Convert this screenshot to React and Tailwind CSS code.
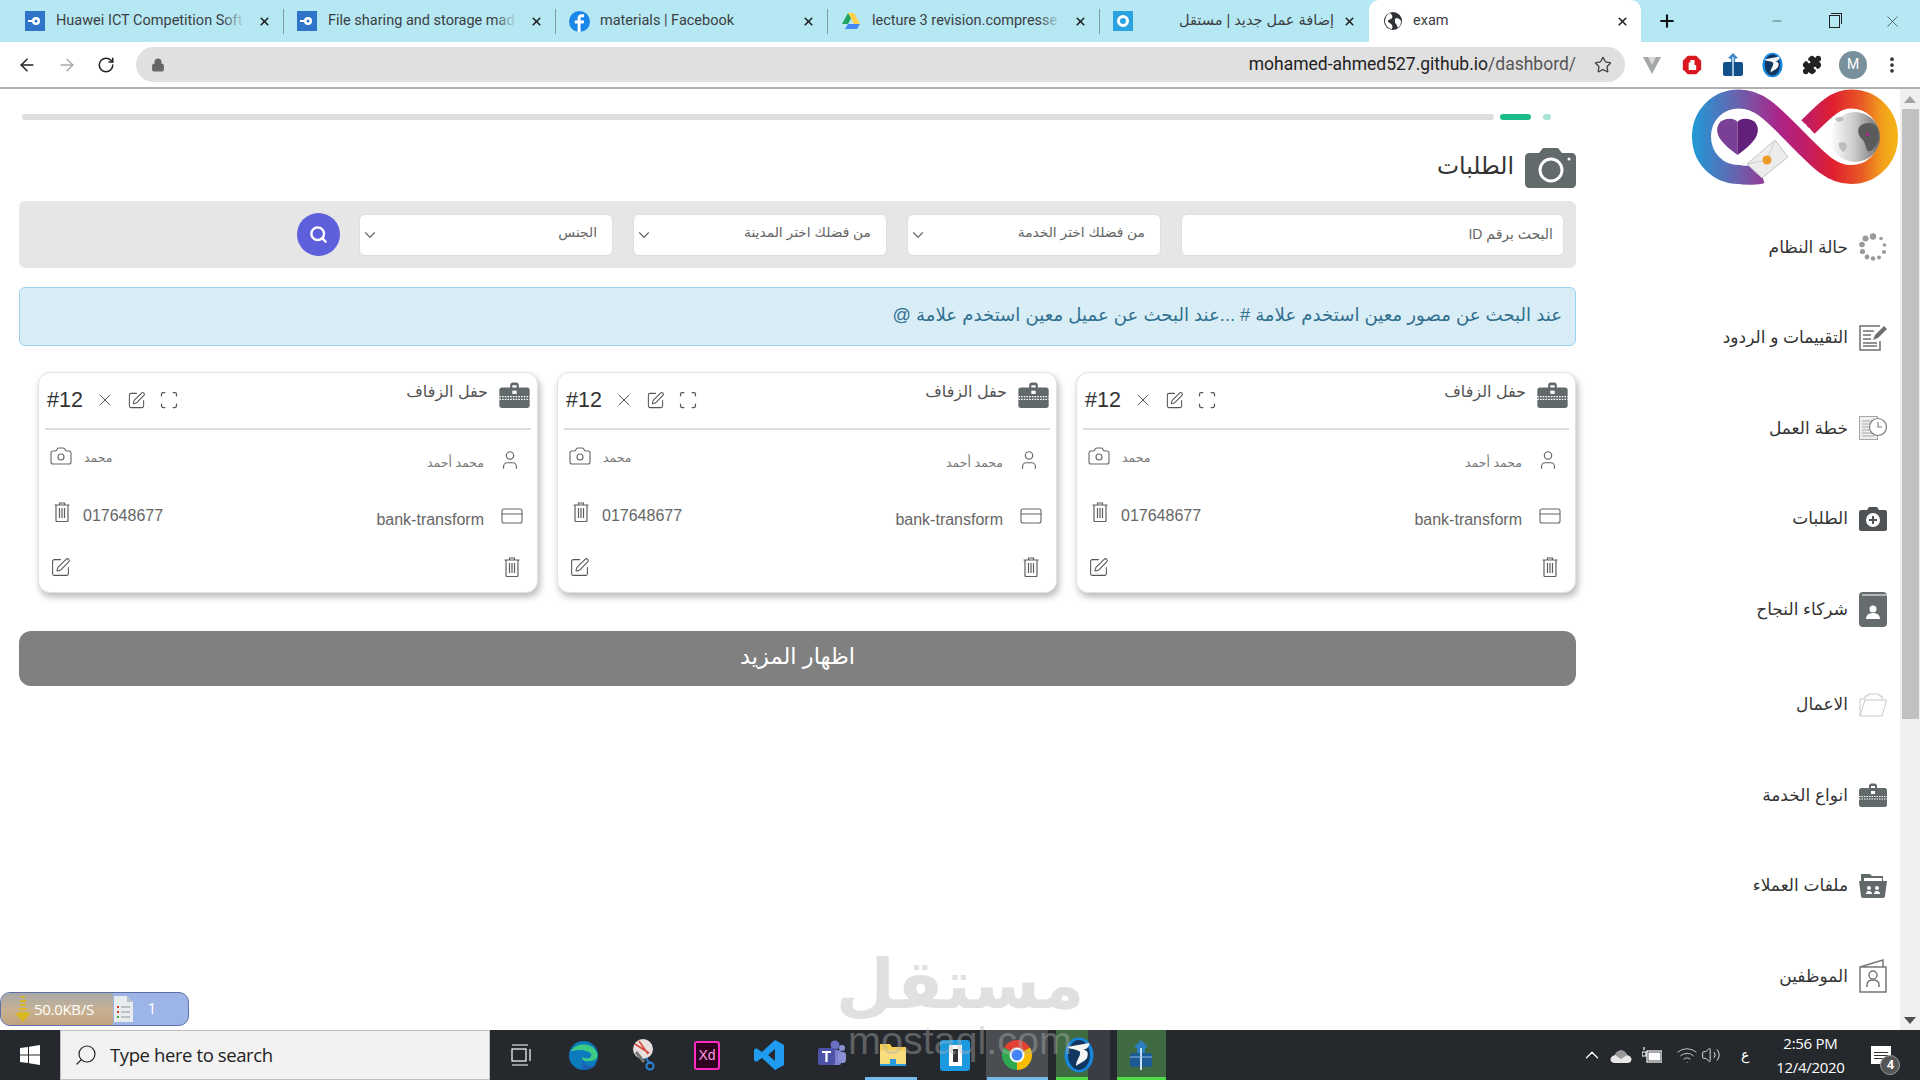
import React from "react";
import { ArrowLeft, ArrowRight, RotateCw, Lock, Star, X, Plus, Minus, Search, ChevronDown, EllipsisVertical, Puzzle, SquarePen, Scan, User, CreditCard, Camera, ChevronUp, Volume2, Wifi } from "lucide-react";

const ar = "font-['Liberation_Sans','DejaVu_Sans',sans-serif]";

const TabIconBird = () => (
  <svg width="20" height="20" viewBox="0 0 20 20"><rect width="20" height="20" fill="#2f74c9" /><circle cx="11" cy="10" r="4" fill="#fff" /><path d="M3 9h6v2H3z" fill="#fff" /><circle cx="11" cy="10" r="1.5" fill="#2f74c9" /></svg>
);
const TabIconFb = () => (
  <svg width="21" height="21" viewBox="0 0 20 20"><circle cx="10" cy="10" r="10" fill="#1a86e8" /><path d="M11 20v-8h3l.4-3H11V7.4c0-1 .4-1.5 1.6-1.5h1.8V3.2C14 3.100 13 3 12 3 9.700 3 8.200 4.400 8.200 7v2H5.500v3h2.700v8z" fill="#fff" /></svg>
);
const TabIconDrive = () => (
  <svg width="20" height="20" viewBox="0 0 20 20"><path d="M7 2h6l-6 11H1z" fill="#1fa463" /><path d="M7 2h6l6 11h-6z" fill="#ffd04b" /><path d="M4 18l3-5h12l-3 5z" fill="#4688f4" /></svg>
);
const TabIconRing = () => (
  <svg width="20" height="20" viewBox="0 0 20 20"><rect width="20" height="20" fill="#2ba3e3" /><circle cx="10" cy="10" r="4.500" fill="none" stroke="#fff" strokeWidth="3" /></svg>
);
const TabIconGlobe = () => (
  <svg width="18" height="18" viewBox="0 0 18 18"><circle cx="9" cy="9" r="9" fill="#2f3337" /><path d="M6 1c2 2 3 3 2 5S4 7 4 9s3 2 4 4 0 3 0 4c-3 0-6-3-7-7 0-4 2-8 5-9zM12 6c2 0 4 1 5 3 0 3-1 5-3 7-1-2-1-3-2-4s-2-4 0-6z" fill="#fff" /></svg>
);

const tabs = [
  { title: "Huawei ICT Competition Soft", icon: <TabIconBird />, width: "w-[272px]", fade: true },
  { title: "File sharing and storage mad", icon: <TabIconBird />, width: "w-[272px]", fade: true },
  { title: "materials | Facebook", icon: <TabIconFb />, width: "w-[272px]" },
  { title: "lecture 3 revision.compresse", icon: <TabIconDrive />, width: "w-[272px]", fade: true },
  { title: "إضافة عمل جديد | مستقل", icon: <TabIconRing />, width: "w-[269px]", rtl: true },
];

const Dots = () => (
  <svg width="28" height="28" viewBox="0 0 28 28" fill="#9a9a9a">
    <circle cx="14" cy="3.500" r="3.200" /><circle cx="22" cy="5.500" r="1.800" /><circle cx="25.500" cy="12" r="1.800" /><circle cx="25" cy="19" r="2" /><circle cx="20" cy="24.500" r="2" /><circle cx="14" cy="25.500" r="2.200" /><circle cx="8" cy="24" r="2.400" /><circle cx="3.500" cy="18.500" r="2.600" /><circle cx="3" cy="11.500" r="2.800" /><circle cx="6.500" cy="5.500" r="3" />
  </svg>
);
const ReviewIcon = () => (
  <svg width="28" height="26" viewBox="0 0 28 26" fill="none" stroke="#6c7070" strokeWidth="1.500">
    <path d="M21 1H1v24h20v-9" /><path d="M4 6h11M4 10h8M4 14h8M4 18h14M4 21h14" />
    <path d="M14 15l2-5L25 1l3 3-9 9z" fill="#6c7070" stroke="none" />
  </svg>
);
const PlanIcon = () => (
  <svg width="28" height="24" viewBox="0 0 28 24" fill="none" stroke="#a8a8a8" strokeWidth="1">
    <rect x="0.500" y="0.500" width="18" height="23" fill="#eee" /><path d="M3 5h12M3 8h8M3 11h8M3 14h8M3 17h12M3 20h12" />
    <circle cx="19" cy="11" r="8.500" fill="#fff" stroke="#808080" strokeWidth="1.200" /><path d="M19 6v5h4" stroke="#808080" strokeWidth="1.200" />
  </svg>
);
const CameraPlusIcon = () => (
  <svg width="28" height="24" viewBox="0 0 28 24">
    <path d="M2 3h6l2-3h8l2 3h6c1 0 2 1 2 2v17c0 1-1 2-2 2H2c-1 0-2-1-2-2V5c0-1 1-2 2-2z" fill="#4f5356" />
    <circle cx="14" cy="13" r="7" fill="#fff" /><path d="M10 13h8M14 9v8" stroke="#4f5356" strokeWidth="2" />
  </svg>
);
const PartnerIcon = () => (
  <svg width="28" height="35" viewBox="0 0 28 35">
    <rect width="28" height="35" rx="4" fill="#666c6d" /><path d="M3 3h25" stroke="#fff" strokeWidth="1" />
    <circle cx="14" cy="17" r="3.500" fill="#fff" /><path d="M7 27c0-4 3-6 7-6s7 2 7 6z" fill="#fff" />
  </svg>
);
const FolderOpenIcon = () => (
  <svg width="28" height="24" viewBox="0 0 28 24" fill="none" stroke="#c8c8c8" strokeWidth="1">
    <path d="M1 23V6h5V3h3V1h11v2h3v4" /><path d="M1 23h22l4.500-16H6z" />
  </svg>
);
const BriefcaseIcon = ({ w = 28, h = 24 }) => (
  <svg width={w} height={h} viewBox="0 0 28 24">
    <path d="M10 6V3c0-1.500 1-2.500 2.500-2.500h3C17 .5 18 1.500 18 3v3h-2V3h-4v3z" fill="#62696a" />
    <rect y="5" width="28" height="19" rx="2.500" fill="#62696a" />
    <path d="M0 13.500h28M0 16h28" stroke="#fff" strokeWidth="1" strokeDasharray="1.500 1" />
    <rect x="12" y="8" width="4" height="3" fill="#fff" />
  </svg>
);
const FilesIcon = () => (
  <svg width="28" height="24" viewBox="0 0 28 24">
    <path d="M2 0h9l2 2h11v5H2z" fill="#62696a" /><path d="M5 4h18v3H5z" fill="#fff" />
    <path d="M0 7h28l-2 15c0 1-1 2-2 2H4c-1 0-2-1-2-2z" fill="#62696a" />
    <circle cx="10" cy="14" r="2" fill="#fff" /><circle cx="18" cy="14" r="2" fill="#fff" /><path d="M7 20c0-2 1-3 3-3s3 1 3 3zM15 20c0-2 1-3 3-3s3 1 3 3z" fill="#fff" />
  </svg>
);
const EmployeeIcon = () => (
  <svg width="28" height="34" viewBox="0 0 28 34" fill="none" stroke="#777" strokeWidth="1.500">
    <path d="M1 8h26v25H1zM1 8l23-7v7" />
    <circle cx="14" cy="16" r="4" /><path d="M8 28v-2c0-3 2-5 6-5s6 2 6 5v2" />
  </svg>
);

const navItems = [
  { label: "حالة النظام", icon: <Dots /> },
  { label: "التقييمات و الردود", icon: <ReviewIcon /> },
  { label: "خطة العمل", icon: <PlanIcon /> },
  { label: "الطلبات", icon: <CameraPlusIcon /> },
  { label: "شركاء النجاح", icon: <PartnerIcon /> },
  { label: "الاعمال", icon: <FolderOpenIcon />, extra: "mt-[5px]" },
  { label: "انواع الخدمة", icon: <BriefcaseIcon /> },
  { label: "ملفات العملاء", icon: <FilesIcon /> },
  { label: "الموظفين", icon: <EmployeeIcon /> },
];

const TrashIcon = ({ w = 16, h = 20 }) => (
  <svg width={w} height={h} viewBox="0 0 16 20" fill="none" stroke="#5f5f5f" strokeWidth="1.200">
    <path d="M0.500 3h15M5.500 3V1h5v2M2 3v15.500c0 .5.500 1 1 1h10c.5 0 1-.5 1-1V3" />
    <path d="M5.500 6v10M8 6v10M10.500 6v10" />
  </svg>
);

const SearchField = ({ label }) => (
  <div className="w-[254px] h-[42px] bg-white rounded-md border border-[#dedede] flex items-center justify-between pl-[1px] pr-[15px]">
    <ChevronDown size={18} color="#666" strokeWidth={1.500} />
    <span className={`${ar} text-[13.800px] text-[#666] -mt-[2px]`}>{label}</span>
  </div>
);

const OrderCard = () => (
  <div className="w-[500px] h-[221px] bg-white rounded-xl border border-[#e2e2e2] shadow-[2px_4px_7px_rgba(0,0,0,0.28)] px-[6px]">
    <div className="h-[57px] border-b-2 border-[#dddddd] flex justify-between">
      <div className="flex items-center pl-[2px] pb-[1px]">
        <span className="font-['Liberation_Sans',sans-serif] text-[21.500px] text-[#333] w-[48px]">#12</span>
        <X size={20} strokeWidth={1.100} color="#444" />
        <span className="ml-[12px]"><SquarePen size={19} strokeWidth={1.300} color="#555" /></span>
        <span className="ml-[13px]"><Scan size={20} strokeWidth={1.500} color="#555" /></span>
      </div>
      <div className="flex items-start pt-[9px]">
        <span className={`${ar} text-[16px] text-[#555] leading-[20px] mr-[10px]`}>حفل الزفاف</span>
        <BriefcaseIcon w={33} h={26} />
      </div>
    </div>
    <div className="flex justify-between h-[46px] pl-[4px] pr-[10px]">
      <div className="flex pt-[15px]">
        <Camera size={24} strokeWidth={1.100} color="#666" className="-mt-[1px]" />
        <span className={`${ar} text-[12.500px] text-[#777] ml-[11px] mt-[4px]`}>محمد</span>
      </div>
      <div className="flex pt-[20px]">
        <span className={`${ar} text-[12.500px] text-[#777] mr-[15px] mt-[4px]`}>محمد أحمد</span>
        <User size={22} strokeWidth={1.300} color="#666" className="-mt-[1px]" />
      </div>
    </div>
    <div className="flex justify-between h-[44px] pl-[9px] pr-[7px]">
      <div className="flex pt-[26px]">
        <TrashIcon />
        <span className="font-['Liberation_Sans',sans-serif] text-[16px] text-[#666] ml-[13px] leading-[22px] mt-[3px]">017648677</span>
      </div>
      <div className="flex pt-[29px]">
        <span className="font-['Liberation_Sans',sans-serif] text-[16px] text-[#666] mr-[16px] leading-[22px] mt-[4px]">bank-transform</span>
        <CreditCard size={24} strokeWidth={1.100} color="#666" className="-mt-[1px]" />
      </div>
    </div>
    <div className="flex justify-between pl-[5px] pr-[11px] pt-[37px]">
      <SquarePen size={21} strokeWidth={1.200} color="#555" />
      <TrashIcon />
    </div>
  </div>
);

const taskIcons = [
  <svg width="22" height="22" viewBox="0 0 22 22" fill="none" stroke="#fff" strokeWidth="1.200"><path d="M2 1h16M2 21h16" /><rect x="2" y="5" width="14" height="12" /><path d="M20 5v12" /></svg>,
  <svg width="31" height="31" viewBox="0 0 32 32"><circle cx="16" cy="16" r="15" fill="#0c7bbd" /><path d="M3 12C6 3 25 1 30 13c2 7-3 9-10 9-5 0-6-3-5-5 1 3 10 3 9-2-2-5-15-6-21-3z" fill="#3ecb83" /><path d="M15 17c0 8 6 14 15 7-3 5-10 8-15 6z" fill="#1a5fb4" /></svg>,
  <svg width="32" height="34" viewBox="0 0 32 34"><circle cx="14" cy="11" r="10" fill="#e8e0de" /><path d="M6 6l14 9M10 3l9 13" stroke="#d8433a" strokeWidth="1.500" /><path d="M7 14l8 10" stroke="#777" strokeWidth="3" /><circle cx="21" cy="28" r="3.500" fill="none" stroke="#2a84d8" strokeWidth="2" /><path d="M17 20l4 6" stroke="#2a84d8" strokeWidth="2" /></svg>,
  <div className="w-[26px] h-[29px] border-2 border-[#ff2bc2] rounded-[3px] bg-[#2e001f] flex items-center justify-center text-[#ff9ae0] text-[14px] font-['Liberation_Sans',sans-serif]">Xd</div>,
  <svg width="32" height="32" viewBox="0 0 32 32"><path d="M22 1l9 5v20l-9 5-13-12-6 4-2-2V11l2-2 6 4zM22 10l-7 6 7 6z" fill="#1f9cf0" fillRule="evenodd" /></svg>,
  <svg width="32" height="32" viewBox="0 0 32 32"><circle cx="20" cy="6" r="4.500" fill="#6b70c4" /><circle cx="27" cy="9" r="3" fill="#8b8fd6" /><rect x="14" y="11" width="12" height="15" rx="2" fill="#7b80d0" /><rect x="23" y="13" width="8" height="11" rx="3" fill="#8b8fd6" /><rect x="3" y="9" width="17" height="17" rx="2" fill="#4b52a8" /><path d="M7 13h9M11.500 13v10" stroke="#fff" strokeWidth="2.200" /></svg>,
  <svg width="30" height="30" viewBox="0 0 30 30"><path d="M2 4h10l2 3h14v19H2z" fill="#f6cf52" /><path d="M2 10h26v16H2z" fill="#f9dd7b" /><rect x="12" y="19" width="6" height="7" fill="#2a9be0" /><rect x="2" y="24" width="26" height="2" fill="#2a9be0" /></svg>,
  <div className="w-[30px] h-[31px] bg-[#1b9ae0] rounded-[3px] flex items-center justify-center"><div className="w-[13px] h-[21px] bg-white flex items-center justify-center"><div className="w-[5px] h-[13px] bg-[#33373b]" /></div></div>,
  <svg width="32" height="32" viewBox="0 0 32 32"><path d="M16 16L3 8.500A15 15 0 0 1 29 8.500z" fill="#e34133" /><path d="M16 16L3 8.500A15 15 0 0 0 16 31z" fill="#2fa84f" /><path d="M16 16l13-7.500A15 15 0 0 1 16 31z" fill="#fbbc05" /><circle cx="16" cy="16" r="7.500" fill="#fff" /><circle cx="16" cy="16" r="5.500" fill="#4285f4" /></svg>,
  <svg width="30" height="36" viewBox="0 0 30 36"><ellipse cx="15" cy="18" rx="14.500" ry="17.500" fill="#1787dc" /><ellipse cx="15" cy="18" rx="11" ry="15" fill="#11365f" /><path d="M3 10l22-4c1 3-2 6-6 7 4 0 6 2 4 8-3 4-9 6-11 8 0-6 5-10 4-14C14 12 8 13 3 10z" fill="#f5f5f5" /></svg>,
  <svg width="24" height="30" viewBox="0 0 24 30"><path d="M12 0l7 7-3 1v5H8V8L5 7z" fill="#2b7fc0" /><rect x="1" y="13" width="22" height="14" rx="2" fill="#1c5b94" /><path d="M12 8v22" stroke="#c8dff3" strokeWidth="2" /><path d="M1 17h22" stroke="#8dbbe0" strokeWidth="1" /></svg>,
];

const taskBgs = {
  8: "bg-[#4a4e52]",
  9: "bg-[linear-gradient(90deg,#25292d_0,#25292d_8px,#3f6a42_8px,#3f6a42_40px,#3a3e44_40px)]",
  10: "bg-[linear-gradient(90deg,#25292d_0,#25292d_7px,#3f6a42_7px,#3f6a42_56px,#25292d_56px)]",
};
const taskLines = {
  6: "left-[3px] w-[52px] bg-[#76b9ed]",
  8: "left-[1px] w-[61px] bg-[#76b9ed]",
  9: "left-[8px] w-[32px] bg-[#4fdc45]",
  10: "left-[7px] w-[49px] bg-[#4fdc45]",
};

const Logo = () => (
  <svg width="207" height="96" viewBox="0 0 207 96">
    <defs>
      <linearGradient id="inf" gradientUnits="userSpaceOnUse" x1="0" y1="0" x2="207" y2="0">
        <stop offset="0" stopColor="#1f9ad6" />
        <stop offset="0.22" stopColor="#6a62ae" />
        <stop offset="0.42" stopColor="#ab2488" />
        <stop offset="0.55" stopColor="#c01d66" />
        <stop offset="0.68" stopColor="#e01f30" />
        <stop offset="0.82" stopColor="#e85a25" />
        <stop offset="0.92" stopColor="#f3a01b" />
        <stop offset="1" stopColor="#f5b716" />
      </linearGradient>
      <linearGradient id="glb" x1="0" y1="0" x2="1" y2="0">
        <stop offset="0" stopColor="#ffffff" />
        <stop offset="0.5" stopColor="#c9c9c9" />
        <stop offset="1" stopColor="#6b6b6b" />
      </linearGradient>
    </defs>
    <path d="M70 85 C66 86 55 87 47 85.500 C26 85.500 9.500 69 9.500 47.500 C9.500 26 26 10 47 10 C66 10 78 22 103 47.500 C128 73 140 85.500 159 85.500 C180 85.500 196.500 69 196.500 47.500 C196.500 26 180 10 159 10 C143 10 132 22 116 38" fill="none" stroke="url(#inf)" strokeWidth="19" />
    <path d="M109 31l2 5 3-1 1 5 3-1 1 5 4 1-3 4-15-14z" fill="#fff" />
    <circle cx="163" cy="48" r="25" fill="url(#glb)" />
    <path d="M168 37c5-4 13-4 17 1 3 6 2 14-2 20-3 3-6 6-8 3-2-5-2-9-6-12-3-4-4-8-1-12z" fill="#5b5b5b" />
    <path d="M143 30c4-3 8-2 9 0-2 3-7 4-9 0zM147 54c4-2 8 0 8 3-1 4-3 7-5 5-2-2-4-6-3-8z" fill="#bdbdbd" />
    <rect x="174" y="44" width="3" height="3" fill="#a3298f" />
    <path d="M45.500 33c-3-4-9-4-14-2-7 3-8 11-4 18 4 6 11 12 18 17z" fill="#7a4096" />
    <path d="M45.500 33c3-4 9-4 14-2 7 3 8 11 4 18-4 6-11 12-18 17z" fill="#63207a" />
    <path d="M55 75L83 51 96 68 70 89z" fill="#ececea" stroke="#c4c4c4" strokeWidth="1" />
    <path d="M55 75L75 71 83 51" fill="none" stroke="#cfcfcf" strokeWidth="1" />
    <circle cx="75" cy="71" r="4.500" fill="#ee9a2a" />
  </svg>
);

export default function App() {
  return (
    <div className="w-[1920px] h-[1080px] overflow-hidden relative bg-white flex flex-col font-['Roboto',sans-serif]">
      {/* tab strip */}
      <div className="h-[42px] bg-[#b6e8f3] flex items-end pl-[12px] shrink-0">
        {tabs.map((t, i) => (
          <div key={i} className={`${t.width} h-[42px] flex items-center pl-[13px] pr-[13px] relative`}>
            <div className="w-[20px] shrink-0">{t.icon}</div>
            <div className={`flex-1 relative overflow-hidden whitespace-nowrap text-[14.500px] text-[#3c4043] ml-[11px] ${t.rtl ? `text-right ${ar}` : ""}`} dir={t.rtl ? "rtl" : "ltr"}>
              {t.title}
              {t.fade && <div className="absolute right-0 top-0 h-full w-[22px] bg-gradient-to-r from-transparent to-[#b6e8f3]" />}
            </div>
            <X size={13} strokeWidth={3} color="#222" className={`shrink-0 ${t.rtl ? "ml-[9px]" : "ml-[13px]"}`} />
            {i < 4 && <div className="absolute right-0 top-[9px] w-px h-[25px] bg-[#7f9aa3]" />}
          </div>
        ))}
        <div className="w-[272px] h-[42px] bg-white rounded-t-[10px] flex items-center pl-[15px] pr-[12px]">
          <TabIconGlobe />
          <div className="flex-1 text-[14.500px] text-[#3c4043] ml-[11px]">exam</div>
          <X size={13} strokeWidth={3} color="#222" />
        </div>
        <div className="w-[52px] h-[42px] flex items-center justify-center"><Plus size={20} strokeWidth={2.500} color="#111" /></div>
        <div className="ml-auto flex h-[42px]">
          <div className="w-[57px] flex items-center justify-center"><Minus size={14} strokeWidth={1} color="#222" /></div>
          <div className="w-[59px] flex items-center justify-center">
            <div className="w-[11px] h-[13px] border border-[#222] relative"><div className="absolute -top-[3px] left-[1px] w-[11px] h-[11px] border-t border-r border-[#222]" /></div>
          </div>
          <div className="w-[56px] flex items-center justify-center"><X size={19} strokeWidth={0.800} color="#222" /></div>
        </div>
      </div>
      {/* toolbar */}
      <div className="h-[47px] bg-white border-b-2 border-[#b0b0b0] flex items-center shrink-0">
        <div className="w-[136px] flex items-center pl-[17px] gap-[20px]">
          <ArrowLeft size={20} strokeWidth={1.800} color="#222" />
          <ArrowRight size={20} strokeWidth={1.800} color="#aaa" />
          <RotateCw size={18} strokeWidth={2} color="#222" />
        </div>
        <div className="w-[1489px] h-[35px] bg-[#e0e0e0] rounded-full flex items-center justify-between pl-[15px] pr-[13px]">
          <Lock size={14} fill="#666" color="#666" />
          <div className="flex items-center">
            <span className="text-[17.500px] text-[#222]">mohamed-ahmed527.github.io<span className="text-[#555]">/dashbord/</span></span>
            <Star size={18} strokeWidth={1.800} color="#444" className="ml-[18px]" />
          </div>
        </div>
        <div className="flex-1 flex items-center pl-[17px]">
          <svg width="20" height="20" viewBox="0 0 20 20"><path d="M1 2h18l-9 17z" fill="#a5a8a8" /><path d="M6 2h8l-4 8z" fill="#d8d8d8" /></svg>
          <svg width="20" height="24" viewBox="0 0 24 24" className="ml-[20px]"><path d="M7 1h10l6 6v10l-6 6H7l-6-6V7z" fill="#d8171e" /><path d="M8 18V9h2V6h5v6h2v6z" fill="#fff" /></svg>
          <svg width="20" height="24" viewBox="0 0 20 24" className="ml-[21px]"><path d="M10 0l5 5-3 1v3H8V6L5 5z" fill="#3f86c4" /><rect x="0" y="9" width="20" height="14" rx="2" fill="#12508c" /><path d="M10 4v20" stroke="#cfe4f5" strokeWidth="1.500" /></svg>
          <svg width="21" height="26" viewBox="0 0 30 36" className="ml-[19px]"><ellipse cx="15" cy="18" rx="14.500" ry="17.500" fill="#1787dc" /><ellipse cx="15" cy="18" rx="11" ry="15" fill="#11365f" /><path d="M3 10l22-4c1 3-2 6-6 7 4 0 6 2 4 8-3 4-9 6-11 8 0-6 5-10 4-14C14 12 8 13 3 10z" fill="#f5f5f5" /></svg>
          <Puzzle size={20} fill="#222" color="#222" className="ml-[19px]" />
          <div className="ml-[17px] w-[28px] h-[28px] rounded-full bg-[#78909c] text-white text-[14px] flex items-center justify-center">M</div>
          <EllipsisVertical size={20} strokeWidth={2.500} color="#333" className="ml-[15px]" />
        </div>
      </div>
      {/* page */}
      <div className="flex-1 flex min-h-0">
        <main className="w-[1595px] pl-[19px] shrink-0">
          <div className="flex items-center w-[1532px] ml-[3px] h-[6px] mt-[25px]">
            <div className="w-[1472px] h-[6px] rounded-full bg-[#dedede]" />
            <div className="w-[31px] h-[6px] ml-[6px] rounded-full bg-[#1abc8c]" />
            <div className="w-[8px] h-[6px] ml-[12px] rounded-full bg-[#a6e4d6]" />
          </div>
          <div className="w-[1557px] flex justify-end items-center h-[40px] mt-[28px]">
            <span className={`${ar} text-[23.500px] text-[#333] mr-[11px] -mt-[2px]`}>الطلبات</span>
            <svg width="51" height="40" viewBox="0 0 51 40">
              <path d="M4 5h10l4-5h15l4 5h10c2 0 4 2 4 4v27c0 2-2 4-4 4H4c-2 0-4-2-4-4V9c0-2 2-4 4-4z" fill="#636a6b" />
              <circle cx="26" cy="22" r="11" fill="none" stroke="#fff" strokeWidth="3" /><circle cx="44" cy="11" r="1.500" fill="#fff" />
            </svg>
          </div>
          <div className="w-[1557px] h-[67px] mt-[13px] bg-[#e6e6e6] rounded-md flex items-center pl-[278px] gap-[19px]">
            <div className="w-[43px] h-[43px] rounded-full bg-[#5d5fdb] flex items-center justify-center">
              <Search size={19} strokeWidth={3} color="#fff" />
            </div>
            <div className="flex gap-[20px]">
              <SearchField label="الجنس" />
              <SearchField label="من فضلك اختر المدينة" />
              <SearchField label="من فضلك اختر الخدمة" />
              <div className="w-[383px] h-[42px] bg-white rounded-md border border-[#dedede] flex items-center justify-end pr-[10px]">
                <span className={`${ar} text-[14px] text-[#666]`} dir="rtl">البحث برقم ID</span>
              </div>
            </div>
          </div>
          <div className="w-[1557px] h-[59px] mt-[19px] bg-[#d9edf7] border border-[#9ad3ee] rounded-md flex items-center justify-end pr-[13px]">
            <span className={`${ar} text-[18.150px] text-[#31708f] -mt-[2px]`} dir="rtl">عند البحث عن مصور معين استخدم علامة # ...عند البحث عن عميل معين استخدم علامة @</span>
          </div>
          <div className="w-[1557px] flex justify-end gap-[19px] mt-[26px]">
            <OrderCard />
            <OrderCard />
            <OrderCard />
          </div>
          <button className={`w-[1557px] h-[55px] mt-[38px] pb-[3px] bg-[#808080] rounded-xl text-white text-[22.500px] ${ar}`}>اظهار المزيد</button>
        </main>
        <aside className="flex-1 relative">
          <div className="absolute left-[97px] top-0 overflow-hidden h-[96px]"><Logo /></div>
          <div className="pt-[113px] flex flex-col">
            {navItems.map((n, i) => (
              <div key={i} className={`h-[90.500px] flex items-center justify-end pr-[13px] ${n.extra || ""}`}>
                <span className={`${ar} text-[17px] text-[#333] mr-[11px]`}>{n.label}</span>
                <div className="w-[28px] flex justify-center">{n.icon}</div>
              </div>
            ))}
          </div>
        </aside>
        <div className="w-[20px] bg-[#f0f0f0] flex flex-col items-center shrink-0 relative">
          <div className="h-[20px] flex items-center"><div className="w-0 h-0 border-x-[6px] border-x-transparent border-b-[7px] border-b-[#a3a3a3]" /></div>
          <div className="w-[17px] h-[610px] bg-[#c1c1c1]" />
          <div className="mt-auto h-[20px] flex items-center"><div className="w-0 h-0 border-x-[6px] border-x-transparent border-t-[7px] border-t-[#505050]" /></div>
        </div>
      </div>
      {/* taskbar */}
      <div className="h-[50px] bg-[#25292d] flex items-stretch shrink-0">
        <div className="w-[60px] flex items-center justify-center">
          <svg width="20" height="20" viewBox="0 0 20 20" fill="#fff"><path d="M0 3l8-1v7.500H0zM9 1.800L20 0v9.500H9zM0 10.500h8V18l-8-1zM9 10.500h11V20L9 18.200z" /></svg>
        </div>
        <div className="w-[430px] bg-[#f2f2f2] border border-[#bfbfbf] flex items-center pl-[13px]">
          <Search size={24} strokeWidth={1.200} color="#222" className="-scale-x-100" />
          <span className="ml-[12px] text-[18.500px] text-[#222] font-['Open_Sans',sans-serif] tracking-[-0.4px]">Type here to search</span>
        </div>
        {taskIcons.map((icon, i) => (
          <div key={i} className={`w-[62px] relative flex items-center justify-center ${taskBgs[i] || ""}`}>
            {icon}
            {taskLines[i] && <div className={`absolute bottom-0 h-[3px] ${taskLines[i]}`} />}
          </div>
        ))}
        <div className="flex-1 flex items-center pl-[409px]">
          <ChevronUp size={22} strokeWidth={1.300} color="#fff" />
          <svg width="22" height="16" viewBox="0 0 22 16" className="ml-[7px]"><path d="M5 16c-6 0-6-7 0-8 2-6 10-6 12 0 6 1 6 8 0 8z" fill="#e8e8e8" /><path d="M5 8c2-6 10-6 12 0l-6 4z" fill="#9a9a9a" /></svg>
          <svg width="20" height="18" viewBox="0 0 20 18" className="ml-[10px]" fill="none" stroke="#fff" strokeWidth="1.200"><rect x="5" y="5" width="15" height="11" /><rect x="7" y="7" width="11" height="7" fill="#fff" /><path d="M2 1v3M0 6h4v4H0z" /></svg>
          <Wifi size={22} strokeWidth={1} color="#ccc" className="ml-[14px]" />
          <Volume2 size={20} strokeWidth={1.200} color="#ddd" className="ml-[3px]" />
          <span className={`${ar} text-white text-[14px] ml-[20px]`}>ع</span>
          <div className="ml-[21px] w-[80px] flex flex-col items-center text-white text-[15px] leading-[24px] font-['Open_Sans',sans-serif] tracking-[-0.3px]">
            <span>2:56 PM</span>
            <span>12/4/2020</span>
          </div>
          <div className="relative ml-[21px]">
            <div className="w-[20px] h-[18px] bg-white flex flex-col gap-[2px] justify-center px-[3px]"><div className="h-px bg-[#333]" /><div className="h-px bg-[#333]" /><div className="h-px bg-[#333]" /></div>
            <div className="absolute -right-[9px] top-[9px] w-[20px] h-[20px] rounded-full bg-[#555] border border-[#999] text-white text-[13px] font-bold flex items-center justify-center">4</div>
          </div>
        </div>
      </div>
      {/* network speed widget */}
      <div className="absolute left-0 top-[992px] w-[189px] h-[34px] rounded-[10px] border border-[#5f6fa8] bg-[#9db5e6] overflow-hidden flex items-center">
        <div className="w-[112px] h-full bg-[linear-gradient(180deg,#a8a8a8,#c8b292_55%,#c0a27e)] flex items-center pl-[14px] text-white text-[15px]">
          <svg width="16" height="28" viewBox="0 0 16 28"><path d="M6 1h4v2H6zM5 5h6v2H5zM5 9h6v2H5zM4 13h8v2H4zM4 17h8v1h4l-8 9-8-9h4z" fill="#d9b824" /></svg>
          <span className="ml-[3px] font-['Open_Sans',sans-serif] tracking-[-0.3px]">50.0KB/S</span>
        </div>
        <svg width="19" height="26" viewBox="0 0 19 26" className="ml-[1px]">
          <path d="M0 0h13l6 6v20H0z" fill="#e8ecef" /><path d="M13 0v6h6z" fill="#b8c2cc" />
          <path d="M3 10h2v2H3zM3 15h2v2H3z" fill="#d33" /><path d="M3 20h2v2H3z" fill="#3a3" /><path d="M7 11h9M7 16h9M7 21h9" stroke="#8a95a0" strokeWidth="1" />
        </svg>
        <span className="ml-[15px] text-white text-[14px]">1</span>
      </div>
      {/* watermark */}
      <div className="absolute left-[840px] top-[946px] w-[240px] flex flex-col items-center pointer-events-none text-[#b4b4b4] opacity-40">
        <span className={`${ar} text-[68px] font-bold leading-[76px] h-[76px]`}>مستقل</span>
        <span className="font-['Liberation_Sans',sans-serif] text-[39.500px] leading-[36px] h-[36px]">mostaql.com</span>
      </div>
    </div>
  );
}
